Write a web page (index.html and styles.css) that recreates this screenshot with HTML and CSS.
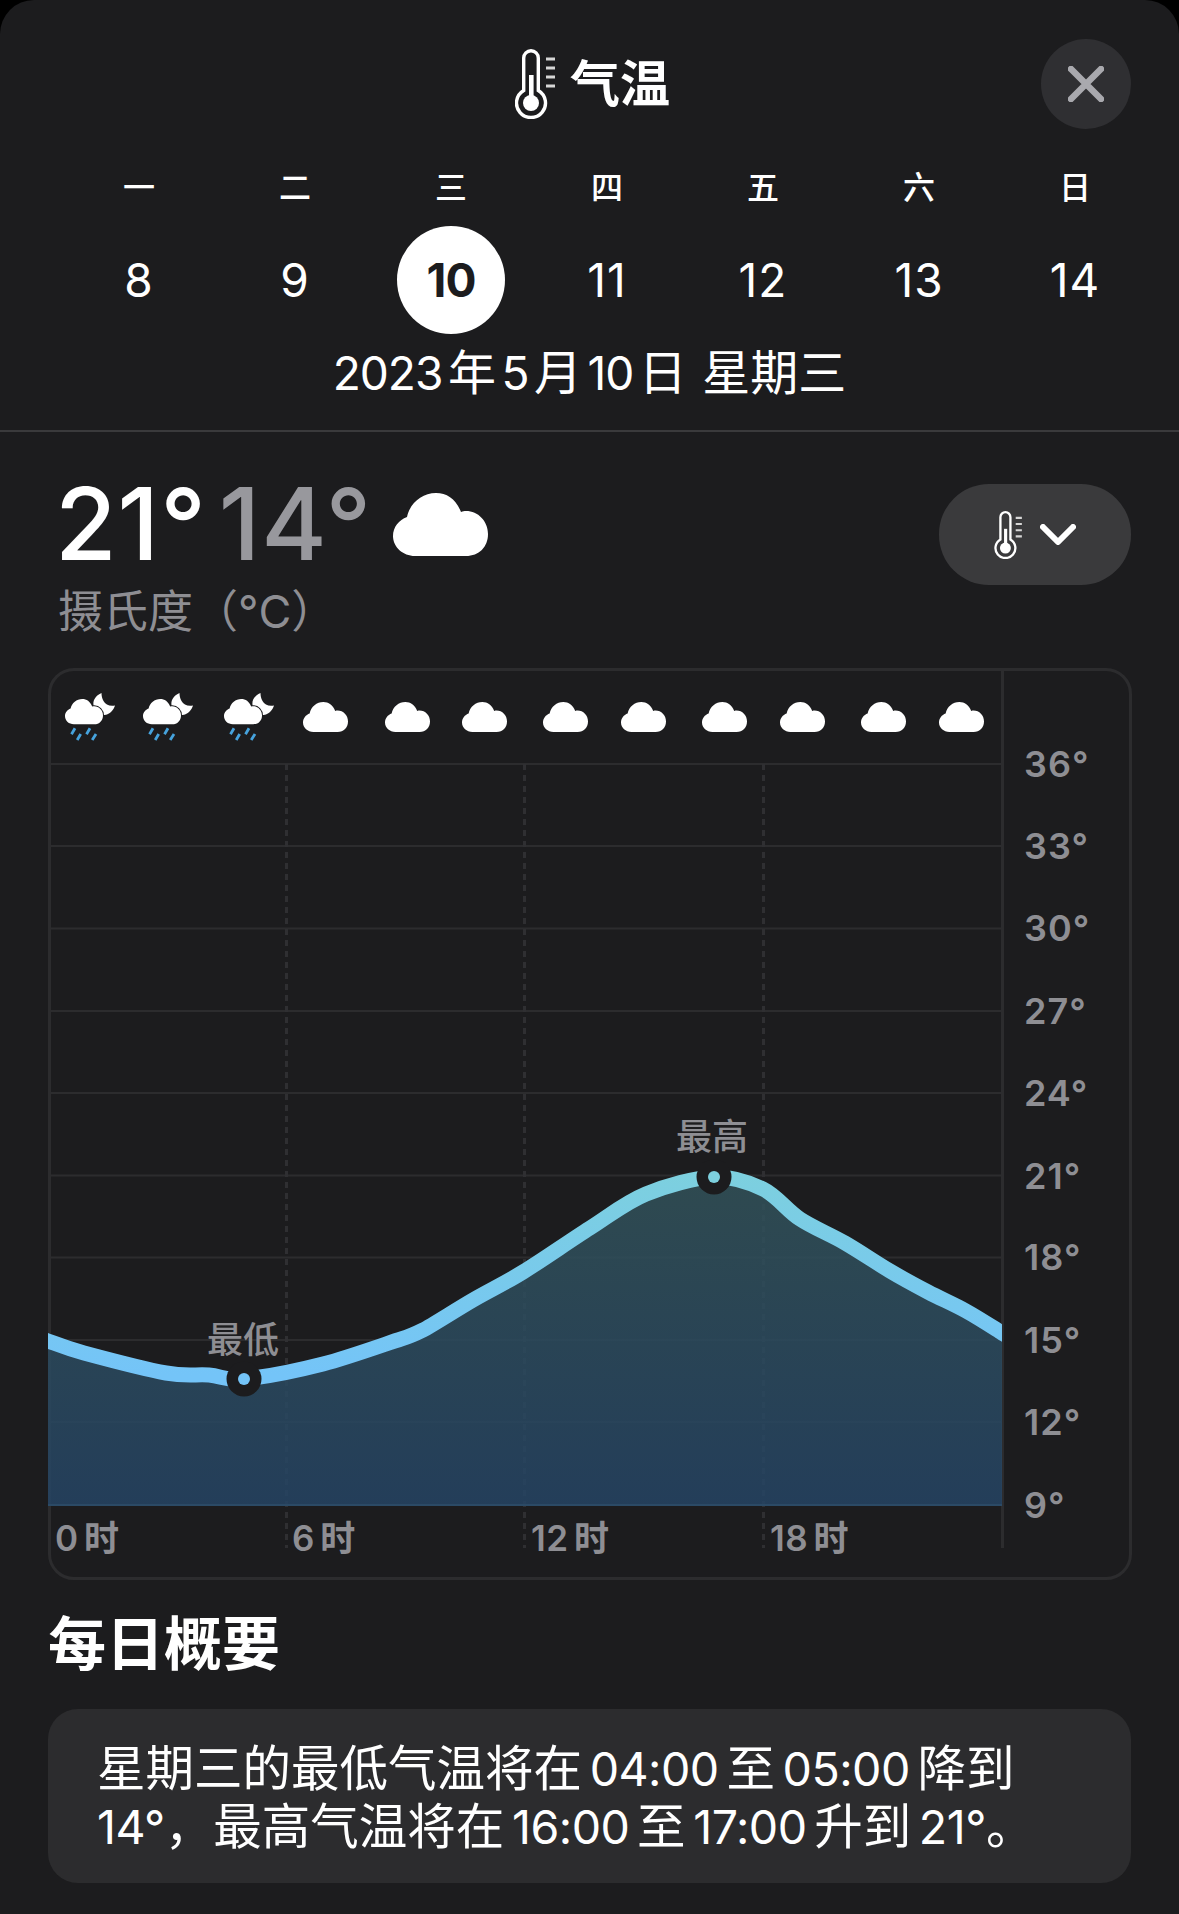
FILE: index.html
```html
<!DOCTYPE html>
<html lang="zh-CN">
<head>
<meta charset="utf-8">
<title>气温</title>
<link rel="stylesheet" href="styles.css">
</head>
<body>
<svg class="defs" width="0" height="0" aria-hidden="true">
  <defs>
    <symbol id="thermo" viewBox="0 0 41 70">
      <path class="th-line" d="M8.7 41.5V9A7.3 7.3 0 0 1 23.3 9V41.5A14.5 14.5 0 1 1 8.7 41.5Z"/>
      <path class="th-stem" d="M16.3 26V54"/>
      <circle class="th-bulb" cx="16" cy="54" r="8"/>
      <path class="th-ticks" d="M31 10H40M31 19H40M31 28H40M31 37H40"/>
    </symbol>
    <symbol id="cloud" viewBox="0 0 95 63">
      <path class="white" d="M22 63C10 63 0 54 0 43C0 34 6 27 14 24C17 10 29 0 43 0C54 0 63 6 68 19C70 18 71 18 73 18C85 18 95 28 95 41C95 54 86 63 73 63Z"/>
    </symbol>
    <symbol id="rainmoon" viewBox="0 0 50 48">
      <path class="white" d="M36.5 0C30 3 27 8 29 14C31 20 38 23 42 21.5C46 20 49 16 50 12.5C45 13.5 40.5 12 38.5 8C37 5 36.5 3 36.5 0Z"/>
      <path class="cloud-cut" transform="translate(0 6) scale(.4)" d="M22 63C10 63 0 54 0 43C0 34 6 27 14 24C17 10 29 0 43 0C54 0 63 6 68 19C70 18 71 18 73 18C85 18 95 28 95 41C95 54 86 63 73 63Z"/>
      <path class="drops" d="M10 35.3L6.5 41.3M15.7 41L12.2 47M25 35.3L21.5 41.3M31 41L27.2 47"/>
    </symbol>
    <linearGradient id="lineGrad" gradientUnits="userSpaceOnUse" x1="0" y1="1170" x2="0" y2="1375">
      <stop offset="0" stop-color="#7dd0de"/>
      <stop offset="1" stop-color="#74c4f8"/>
    </linearGradient>
    <linearGradient id="areaGrad" gradientUnits="userSpaceOnUse" x1="0" y1="1177" x2="0" y2="1505">
      <stop offset="0" stop-color="#325259"/>
      <stop offset="1" stop-color="#254464"/>
    </linearGradient>
    <clipPath id="plotClip"><rect x="48" y="1100" width="954" height="420"/></clipPath>
  </defs>
</svg>

<main class="sheet">
  <header class="top">
    <div class="title-row">
      <span></span>
      <h1 class="title"><svg class="title-icon"><use href="#thermo"/></svg>气温</h1>
      <button class="close" aria-label="关闭">
        <svg class="close-icon" viewBox="0 0 36 36"><path d="M3 3L33 33M33 3L3 33"/></svg>
      </button>
    </div>
    <div class="week">
      <span class="wd">一</span><span class="wd">二</span><span class="wd">三</span><span class="wd">四</span><span class="wd">五</span><span class="wd">六</span><span class="wd">日</span>
      <span class="day">8</span><span class="day">9</span><span class="day day-on">10</span><span class="day">11</span><span class="day">12</span><span class="day">13</span><span class="day">14</span>
    </div>
    <p class="date"><span class="n">2023</span> 年 <span class="n">5</span> 月 <span class="n">10</span> 日 <span class="date-wd">星期三</span></p>
  </header>

  <section class="temps">
    <div class="temps-left">
      <div class="reading">
        <span class="hi">21°</span><span class="lo">14°</span>
        <svg class="big-cloud"><use href="#cloud"/></svg>
      </div>
      <p class="unit">摄氏度（°C）</p>
    </div>
    <button class="picker" aria-label="选择">
      <svg class="picker-icon"><use href="#thermo"/></svg>
      <svg class="chev" viewBox="0 0 36 21"><path d="M3 3L18 18L33 3"/></svg>
    </button>
  </section>

  <section class="chart">
    <svg class="plot" viewBox="51 671 1078 906">
      <g class="grid">
        <path d="M49 764H1002M49 846H1002M49 928.5H1002M49 1011H1002M49 1093H1002M49 1175.5H1002M49 1257.5H1002M49 1340H1002M49 1422H1002"/>
      </g>
      <path class="dash" d="M286.5 764V1548M524.5 764V1548M763.5 764V1548"/>
      <path class="axis" d="M1002.5 668V1548"/>
      <path class="area" d="M48 1341C54 1343 64.3 1347.7 84 1353C103.7 1358.3 145.2 1369.3 166 1373C186.8 1376.7 196 1374 209 1375C222 1376 225 1380.8 244 1379C263 1377.2 296.8 1370.7 323 1364C349.2 1357.3 391 1342 401 1339C411 1336 415 1334 423 1330C431 1326 456.3 1309.7 473 1300C489.7 1290.3 503.5 1284 523 1272C542.5 1260 569.5 1241 590 1228C610.5 1215 625.3 1202.5 646 1194C666.7 1185.5 694.5 1177.8 714 1177C733.5 1176.2 748.7 1182 763 1189C777.3 1196 786.3 1210 800 1219C813.7 1228 830 1234.3 845 1243C860 1251.7 876.2 1262.8 890 1271C903.8 1279.2 915.3 1285.3 928 1292C940.7 1298.7 953.7 1304.2 966 1311C978.3 1317.8 996 1329.3 1002 1333V1505H48Z"/>
      <path class="base" d="M48 1505H1002"/>
      <g clip-path="url(#plotClip)">
        <path class="line" d="M38 1337.5L48 1341C54 1343 64.3 1347.7 84 1353C103.7 1358.3 145.2 1369.3 166 1373C186.8 1376.7 196 1374 209 1375C222 1376 225 1380.8 244 1379C263 1377.2 296.8 1370.7 323 1364C349.2 1357.3 391 1342 401 1339C411 1336 415 1334 423 1330C431 1326 456.3 1309.7 473 1300C489.7 1290.3 503.5 1284 523 1272C542.5 1260 569.5 1241 590 1228C610.5 1215 625.3 1202.5 646 1194C666.7 1185.5 694.5 1177.8 714 1177C733.5 1176.2 748.7 1182 763 1189C777.3 1196 786.3 1210 800 1219C813.7 1228 830 1234.3 845 1243C860 1251.7 876.2 1262.8 890 1271C903.8 1279.2 915.3 1285.3 928 1292C940.7 1298.7 953.7 1304.2 966 1311C978.3 1317.8 996 1329.3 1002 1333L1012 1339"/>
      </g>
      <circle class="dot-ring" cx="244" cy="1379" r="17.5"/>
      <circle class="dot-low" cx="244" cy="1379" r="6"/>
      <circle class="dot-ring" cx="714" cy="1177" r="17.5"/>
      <circle class="dot-high" cx="714" cy="1177" r="6"/>

      <use href="#rainmoon" x="65" y="693" width="50" height="48"/>
      <use href="#rainmoon" x="143" y="693" width="50" height="48"/>
      <use href="#rainmoon" x="224" y="693" width="50" height="48"/>
      <use href="#cloud" x="303" y="702" width="45" height="30"/>
      <use href="#cloud" x="385" y="702" width="45" height="30"/>
      <use href="#cloud" x="462" y="702" width="45" height="30"/>
      <use href="#cloud" x="543" y="702" width="45" height="30"/>
      <use href="#cloud" x="621" y="702" width="45" height="30"/>
      <use href="#cloud" x="702" y="702" width="45" height="30"/>
      <use href="#cloud" x="780" y="702" width="45" height="30"/>
      <use href="#cloud" x="861" y="702" width="45" height="30"/>
      <use href="#cloud" x="939" y="702" width="45" height="30"/>

      <g class="ylabels">
        <text x="1024" y="777">36°</text>
        <text x="1024" y="859">33°</text>
        <text x="1024" y="941">30°</text>
        <text x="1024" y="1024">27°</text>
        <text x="1024" y="1106">24°</text>
        <text x="1024" y="1189">21°</text>
        <text x="1024" y="1270">18°</text>
        <text x="1024" y="1353">15°</text>
        <text x="1024" y="1435">12°</text>
        <text x="1024" y="1518">9°</text>
      </g>
      <g class="xlabels">
        <text x="55" y="1551">0 时</text>
        <text x="292" y="1551">6 时</text>
        <text x="531" y="1551">12 时</text>
        <text x="770" y="1551">18 时</text>
      </g>
      <text class="mark" x="243" y="1353">最低</text>
      <text class="mark" x="712" y="1150">最高</text>
    </svg>
  </section>

  <h2 class="sum-head">每日概要</h2>
  <p class="sum-card">星期三的最低气温将在 <span class="n">04:00</span> 至 <span class="n">05:00</span> 降到<br><span class="n">14°</span>，最高气温将在 <span class="n">16:00</span> 至 <span class="n">17:00</span> 升到 <span class="n">21°</span>。</p>
</main>
</body>
</html>
```

FILE: styles.css
```css
* { box-sizing: border-box; margin: 0; padding: 0; }
html, body { background: #000; }
body {
  width: 1179px;
  height: 1914px;
  overflow: hidden;
  font-family: Inter, "Noto Sans CJK SC", sans-serif;
  color: #fff;
}
.defs { position: absolute; }
.sheet {
  height: 1914px;
  background: #1c1c1e;
  border-radius: 34px 34px 0 0;
  overflow: hidden;
}
.n { font-size: .96em; letter-spacing: -.5px; }

/* header */
.top {
  height: 432px;
  padding: 39px 0 0;
  border-bottom: 2px solid #3a3a3c;
}
.title-row {
  display: grid;
  grid-template-columns: 1fr auto 1fr;
  grid-template-rows: 90px;
  align-items: center;
  padding: 0 48px 0 54px;
}
.title {
  display: flex;
  align-items: center;
  gap: 14px;
  font-size: 50px;
  line-height: 90px;
  font-weight: 700;
}
.title-icon { width: 41px; height: 70px; }
.close {
  justify-self: end;
  width: 90px;
  height: 90px;
  border: 0;
  border-radius: 50%;
  background: #2f2f32;
  display: flex;
  align-items: center;
  justify-content: center;
}
.close-icon { width: 36px; height: 36px; }
.close-icon path { fill: none; stroke: #a9a9ae; stroke-width: 6.5; stroke-linecap: round; }

.th-line { fill: none; stroke: #fff; stroke-width: 3.4; }
.th-stem { fill: none; stroke: #fff; stroke-width: 4.6; }
.th-bulb { fill: #fff; }
.th-ticks { fill: none; stroke: #d6d6d6; stroke-width: 3; }

.week {
  display: grid;
  grid-template-columns: repeat(7, 156px);
  grid-template-rows: 42px 108px;
  row-gap: 17px;
  justify-items: center;
  align-items: center;
  margin: 38px 0 0 61px;
}
.wd { font-size: 32px; line-height: 42px; font-weight: 500; }
.day { font-size: 46px; line-height: 108px; letter-spacing: 1px; }
.day-on {
  width: 108px;
  height: 108px;
  border-radius: 50%;
  background: #fff;
  color: #1c1c1e;
  text-align: center;
  font-weight: 700;
  letter-spacing: -1px;
}
.date {
  margin-top: 14px;
  font-size: 48px;
  line-height: 50px;
  text-align: center;
  word-spacing: -8px;
}
.date .n { letter-spacing: -1px; }
.date-wd { margin-left: 10px; }

/* current reading */
.temps {
  display: flex;
  justify-content: space-between;
  align-items: flex-start;
  padding: 39px 48px 0 55px;
}
.reading { display: flex; align-items: center; height: 106px; font-size: 100px; line-height: 106px; font-weight: 450; letter-spacing: 1px; }
.lo { color: #98989d; margin-left: 12px; }
.big-cloud { width: 95px; height: 63px; margin-left: 21px; }
.unit { font-size: 45px; line-height: 50px; color: #8e8e93; margin: 10px 0 0 3px; }
.picker {
  width: 192px;
  height: 101px;
  margin-top: 13px;
  border: 0;
  border-radius: 50px;
  background: #3a3a3c;
  display: flex;
  align-items: center;
  justify-content: center;
  gap: 17px;
}
.picker-icon { width: 29px; height: 48px; }
.chev { width: 36px; height: 21px; }
.chev path { fill: none; stroke: #fff; stroke-width: 6; stroke-linecap: round; stroke-linejoin: round; }

/* chart */
.chart {
  width: 1084px;
  height: 912px;
  margin: 31px 0 0 48px;
  border: 3px solid #2c2c2e;
  border-radius: 26px;
}
.plot { display: block; width: 1078px; height: 906px; overflow: visible; }
.grid path { fill: none; stroke: #2c2c2e; stroke-width: 2; }
.dash { fill: none; stroke: #2f2f32; stroke-width: 3; stroke-dasharray: 6 5; }
.axis { fill: none; stroke: #2c2c2e; stroke-width: 3; }
.area { fill: url(#areaGrad); fill-opacity: .85; }
.base { fill: none; stroke: #2b4a66; stroke-width: 2; }
.line { fill: none; stroke: url(#lineGrad); stroke-width: 15; }
.dot-ring { fill: #1c1c1e; }
.dot-low { fill: #74c4f8; }
.dot-high { fill: #7dd0de; }
.white { fill: #fff; }
.cloud-cut { fill: #fff; stroke: #1c1c1e; stroke-width: 5; paint-order: stroke; }
.drops { fill: none; stroke: #46a3dd; stroke-width: 2.8; }
.ylabels text, .xlabels text {
  font-size: 36px;
  font-weight: 600;
  fill: #8e8e93;
}
.ylabels text { letter-spacing: 1px; }
.xlabels text { font-size: 35px; word-spacing: -4px; letter-spacing: .5px; }
.mark { font-size: 36px; font-weight: 500; fill: #8e8e93; text-anchor: middle; }

/* summary */
.sum-head {
  margin: 29px 0 0 48px;
  font-size: 58px;
  line-height: 70px;
  font-weight: 700;
}
.sum-card {
  width: 1083px;
  height: 174px;
  margin: 30px 0 0 48px;
  padding: 31px 20px 0 49px;
  border-radius: 30px;
  background: #2c2c2e;
  font-size: 48.5px;
  line-height: 57px;
  word-spacing: -6px;
  white-space: nowrap;
}
```
